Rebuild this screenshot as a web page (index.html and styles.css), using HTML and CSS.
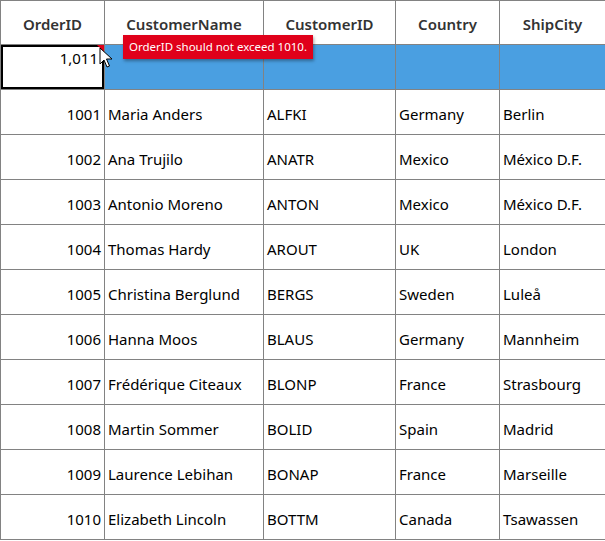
FILE: index.html
```html
<!DOCTYPE html>
<html lang="en">
  <head>
    <meta charset="UTF-8" />
    <title>Orders</title>
    <link rel="stylesheet" href="styles.css">
  </head>
  <body>
    <div class="grid">
      <table class="orders">
        <colgroup>
          <col class="c-id" />
          <col class="c-name" />
          <col class="c-cust" />
          <col class="c-country" />
          <col class="c-city" />
        </colgroup>
        <thead>
          <tr>
            <th>OrderID</th>
            <th>CustomerName</th>
            <th>CustomerID</th>
            <th>Country</th>
            <th>ShipCity</th>
          </tr>
        </thead>
        <tbody>
          <tr class="selected">
            <td class="num editing">
              <span class="edit-value">1,011</span>
              <span class="error-mark"></span>
            </td>
            <td></td>
            <td></td>
            <td></td>
            <td></td>
          </tr>
          <tr><td class="num">1001</td><td>Maria Anders</td><td>ALFKI</td><td>Germany</td><td>Berlin</td></tr>
          <tr><td class="num">1002</td><td>Ana Trujilo</td><td>ANATR</td><td>Mexico</td><td>México D.F.</td></tr>
          <tr><td class="num">1003</td><td>Antonio Moreno</td><td>ANTON</td><td>Mexico</td><td>México D.F.</td></tr>
          <tr><td class="num">1004</td><td>Thomas Hardy</td><td>AROUT</td><td>UK</td><td>London</td></tr>
          <tr><td class="num">1005</td><td>Christina Berglund</td><td>BERGS</td><td>Sweden</td><td>Luleå</td></tr>
          <tr><td class="num">1006</td><td>Hanna Moos</td><td>BLAUS</td><td>Germany</td><td>Mannheim</td></tr>
          <tr><td class="num">1007</td><td>Frédérique Citeaux</td><td>BLONP</td><td>France</td><td>Strasbourg</td></tr>
          <tr><td class="num">1008</td><td>Martin Sommer</td><td>BOLID</td><td>Spain</td><td>Madrid</td></tr>
          <tr><td class="num">1009</td><td>Laurence Lebihan</td><td>BONAP</td><td>France</td><td>Marseille</td></tr>
          <tr><td class="num">1010</td><td>Elizabeth Lincoln</td><td>BOTTM</td><td>Canada</td><td>Tsawassen</td></tr>
        </tbody>
      </table>

      <div class="tooltip">OrderID should not exceed 1010.</div>

      <svg class="cursor" width="14" height="22" viewBox="0 0 14 22">
        <path d="M1 1 L1 17 L5 13 L8 20 L10.5 19 L7.5 12 L13 12 Z" fill="#fff" stroke="#000" stroke-width="1" stroke-linejoin="round" />
      </svg>
    </div>
  </body>
</html>
```

FILE: styles.css
```css
body {
  margin: 0;
  background: #fff;
}

.grid {
  position: relative;
  width: 605px;
}

.orders {
  border-collapse: collapse;
  table-layout: fixed;
  width: 605px;
  font-family: "Noto Sans", sans-serif;
  font-size: 15px;
  color: #000;
}

.c-id {
  width: 104px;
}

.c-name {
  width: 159px;
}

.c-cust {
  width: 132px;
}

.c-country {
  width: 104px;
}

.c-city {
  width: 106px;
}

.orders th,
.orders td {
  border: 1px solid #828282;
  padding: 4px 3px 0;
  white-space: nowrap;
  overflow: hidden;
}

.orders th {
  height: 40px;
  padding-top: 3px;
  font-weight: 600;
  color: #333;
  text-align: center;
}

.orders td {
  height: 40px;
  text-align: left;
}

.orders td.num {
  text-align: right;
}

.selected td {
  background: #4a9fe1;
}

.selected td.editing {
  position: relative;
  vertical-align: top;
  padding: 3px 6px 0 3px;
  background: #fff;
  box-shadow: inset 0 0 0 2px #000;
}

.error-mark {
  position: absolute;
  top: 0;
  right: 0;
  width: 0;
  height: 0;
  border-top: 7px solid #e0001a;
  border-left: 7px solid transparent;
}

.tooltip {
  position: absolute;
  top: 35px;
  left: 123px;
  width: 190px;
  height: 24px;
  line-height: 24px;
  background: #e0001a;
  color: #fff;
  font-family: "Noto Sans", sans-serif;
  font-size: 11.5px;
  text-align: center;
  box-shadow: 1px 2px 3px rgba(0, 0, 0, 0.35);
}

.cursor {
  position: absolute;
  top: 47px;
  left: 99px;
}
```
